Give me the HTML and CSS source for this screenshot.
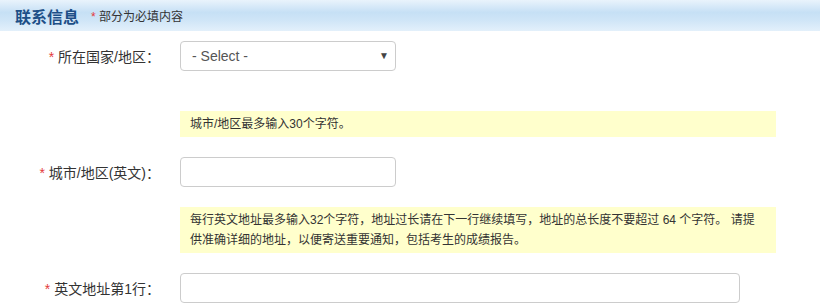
FILE: index.html
```html
<!DOCTYPE html>
<html lang="zh-CN">
<head>
    <meta charset="UTF-8">
    <title>联系信息</title>
    <link rel="stylesheet" href="styles.css">
</head>
<body>
    <div class="section">
        <div class="section-head">
            <h2>联系信息</h2>
            <span class="note"><span class="req">*</span> 部分为必填内容</span>
        </div>

        <div class="form-row first">
            <label class="label"><span class="req">*</span> 所在国家/地区：</label>
            <div class="select-wrap">
                <select>
                    <option>- Select -</option>
                </select>
            </div>
        </div>

        <div class="hint">城市/地区最多输入30个字符。</div>

        <div class="form-row">
            <label class="label"><span class="req">*</span> 城市/地区(英文)：</label>
            <input type="text" class="field">
        </div>

        <div class="hint">每行英文地址最多输入32个字符，地址过长请在下一行继续填写，地址的总长度不要超过 64 个字符。 请提供准确详细的地址，以便寄送重要通知，包括考生的成绩报告。</div>

        <div class="form-row">
            <label class="label"><span class="req">*</span> 英文地址第1行：</label>
            <input type="text" class="field wide">
        </div>
    </div>
</body>
</html>
```

FILE: styles.css
```css
body {
    margin: 0;
    background: #ffffff;
    font-family: "Liberation Sans", "Noto Sans CJK SC", sans-serif;
    color: #333333;
}

.section {
    width: 820px;
}

.section-head {
    height: 31px;
    display: flex;
    align-items: center;
    padding-left: 15px;
    background: linear-gradient(#e9f3fc 0%, #c6e0f5 40%, #cfe5f7 65%, #e3f0fb 100%);
}

.section-head h2 {
    margin: 0 12px 0 0;
    font-size: 16px;
    font-weight: bold;
    color: #1d4f87;
}

.note {
    font-size: 12px;
    color: #333333;
}

.req {
    color: #e4393c;
}

.form-row {
    display: flex;
    align-items: center;
    margin-top: 20px;
}

.form-row.first {
    margin-top: 10px;
    margin-bottom: 40px;
}

.label {
    width: 160px;
    margin-right: 20px;
    text-align: right;
    font-size: 14px;
    color: #333333;
}

.select-wrap {
    position: relative;
    width: 216px;
}

.select-wrap select {
    appearance: none;
    width: 100%;
    height: 30px;
    padding: 0 11px;
    border: 1px solid #cccccc;
    border-radius: 4px;
    background: #ffffff;
    font-family: "Liberation Sans", "Noto Sans CJK SC", sans-serif;
    font-size: 14px;
    color: #555555;
}

.select-wrap::after {
    content: "▼";
    position: absolute;
    right: 7px;
    top: 9px;
    font-size: 10px;
    color: #444444;
    pointer-events: none;
}

.field {
    box-sizing: border-box;
    width: 216px;
    height: 30px;
    border: 1px solid #cccccc;
    border-radius: 4px;
    padding: 0 10px;
    font-size: 14px;
}

.field.wide {
    width: 560px;
}

.hint {
    margin: 20px 44px 0 180px;
    padding: 3px 10px;
    background: #ffffcc;
    font-size: 12px;
    line-height: 20px;
    color: #333333;
}

.form-row.first + .hint {
    margin-top: 0;
}
```
